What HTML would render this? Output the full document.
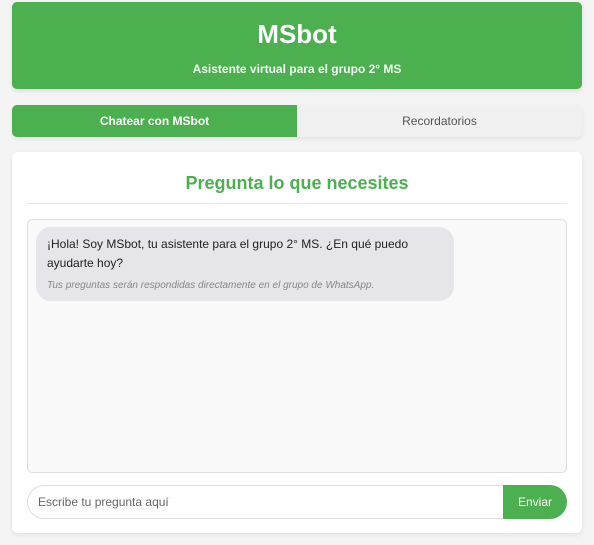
<!DOCTYPE html>
<html><head><meta charset="utf-8"><style>
*{box-sizing:border-box;margin:0;padding:0}
body{width:594px;height:545px;background:#f4f4f4;font-family:"Liberation Sans",Arial,sans-serif;position:relative;overflow:hidden}
.hdr{position:absolute;left:12px;top:2px;width:570px;height:87px;background:#4caf50;border-radius:5px;color:#fff;text-align:center;box-shadow:0 2px 4px rgba(0,0,0,.1)}
.hdr h1{position:absolute;top:17px;width:100%;font-size:26px;font-weight:bold;line-height:30px}
.hdr p{position:absolute;top:60px;width:100%;font-size:12px;font-weight:bold;line-height:15px;color:#f0fff0}
.tabs{position:absolute;left:12px;top:105px;width:570px;height:32px;border-radius:5px;overflow:hidden;display:flex;box-shadow:0 2px 4px rgba(0,0,0,.08);background:#f0f0f0}
.tab{flex:1;text-align:center;line-height:32px;font-size:12px;color:#555}
.tab.a{background:#4caf50;color:#fff;font-weight:bold}
.card{position:absolute;left:12px;top:152px;width:570px;height:381px;background:#fff;border-radius:6px;box-shadow:0 2px 5px rgba(0,0,0,.08)}
.card h2{position:absolute;top:20px;width:100%;text-align:center;color:#4caf50;font-size:18px;font-weight:bold;line-height:22px}
.sep{position:absolute;left:15px;top:51px;width:540px;height:1px;background:#e8e8e8}
.chat{position:absolute;left:15px;top:67px;width:540px;height:254px;background:#f9f9f9;border:1px solid #ddd;border-radius:5px}
.bub{position:absolute;left:8px;top:7px;width:418px;height:74px;background:#e5e5ea;border-radius:15px;padding:8px 11px;font-size:12px;line-height:19px;color:#222}
.bub i{display:block;font-size:10px;color:#888;line-height:12px;margin-top:7px}
.inp{position:absolute;left:15px;top:333px;width:476px;height:34px;border:1px solid #ddd;border-right:none;border-radius:17px 0 0 17px;padding-left:10px;font-size:12px;line-height:32px;color:#666}
.btn{position:absolute;left:491px;top:333px;width:64px;height:34px;background:#4caf50;border-radius:0 17px 17px 0;color:#fff;font-size:12px;text-align:center;line-height:34px}
</style></head><body>
<div class="hdr"><h1>MSbot</h1><p>Asistente virtual para el grupo 2° MS</p></div>
<div class="tabs"><div class="tab a">Chatear con MSbot</div><div class="tab">Recordatorios</div></div>
<div class="card">
<h2>Pregunta lo que necesites</h2>
<div class="sep"></div>
<div class="chat"><div class="bub">¡Hola! Soy MSbot, tu asistente para el grupo 2° MS. ¿En qué puedo ayudarte hoy?<i>Tus preguntas serán respondidas directamente en el grupo de WhatsApp.</i></div></div>
<div class="inp">Escribe tu pregunta aquí</div>
<div class="btn">Enviar</div>
</div>
</body></html>
